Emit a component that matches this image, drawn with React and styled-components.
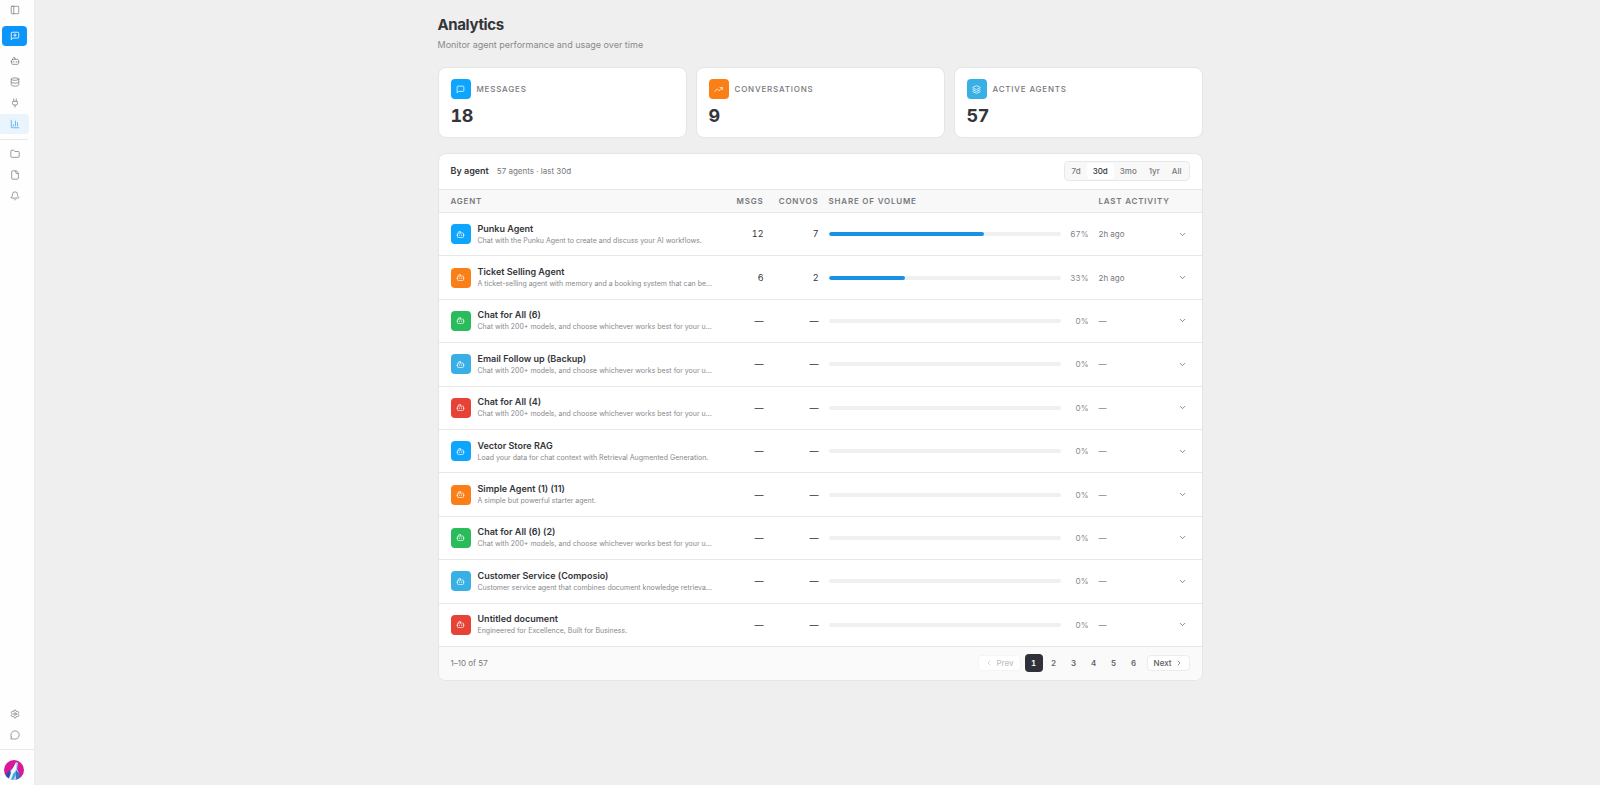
import React, { useState } from "react";
import styled, { createGlobalStyle } from "styled-components";
import {
  PanelLeft, Bot, Database, Plug, ChartColumn, Folder, File, Bell,
  Settings, MessageCircle, TrendingUp, Layers, ChevronDown, ChevronLeft, ChevronRight,
} from "lucide-react";

const GlobalStyle = createGlobalStyle`
  * { box-sizing: border-box; }
  body {
    margin: 0;
    background: #efefef;
    color: #34353a;
    font-family: Inter, "Liberation Sans", sans-serif;
    font-size: 9px;
    line-height: 12px;
  }
  button { font: inherit; cursor: pointer; }
  h1, h2, p { margin: 0; }
`;

const Shell = styled.div`
  display: flex;
  min-height: 100vh;
`;

const Sidebar = styled.nav`
  display: flex;
  flex-direction: column;
  flex: none;
  width: 35px;
  padding-top: 5px;
  background: #fefefe;
  border-right: 1px solid #ebebec;
`;

const NavGroup = styled.div`
  display: flex;
  flex-direction: column;
  align-items: flex-start;
  gap: 1px;
  padding: ${(p) => p.$pad || "0"};
  margin-top: ${(p) => (p.$bottom ? "auto" : "0")};
`;

const NavButton = styled.button`
  display: grid;
  place-items: center;
  width: 29px;
  height: ${(p) => (p.$short ? "10px" : "20px")};
  padding: 0;
  border: 0;
  border-radius: 0 4px 4px 0;
  color: ${(p) => (p.$active ? "#3aa0ea" : "#77787c")};
  background: ${(p) => (p.$active ? "#e9f4fd" : "transparent")};
`;

const NewChat = styled.button`
  display: grid;
  place-items: center;
  width: 25px;
  height: 20px;
  margin: 11px 2px 5px;
  padding: 0;
  border: 0;
  border-radius: 4px;
  color: #fff;
  background: #0c96fa;
`;

const Rule = styled.hr`
  width: ${(p) => (p.$full ? "100%" : "28px")};
  height: 1px;
  margin: 0;
  border: 0;
  background: #e8e8ea;
`;

const Avatar = styled.button`
  width: 20px;
  height: 20px;
  margin: 10px 4px 5px;
  padding: 0;
  border: 0;
  border-radius: 50%;
  overflow: hidden;
  background: none;
  svg { display: block; }
`;

const Main = styled.main`
  flex: 1;
  min-width: 0;
  padding: 15px 16px 24px 21px;
`;

const Page = styled.div`
  max-width: 765px;
  margin: 0 auto;
`;

const Title = styled.h1`
  font-size: 15px;
  line-height: 20px;
  font-weight: 700;
  letter-spacing: -0.025em;
`;

const Subtitle = styled.p`
  margin-top: 4px;
  color: #88898d;
`;

const Stats = styled.section`
  display: grid;
  grid-template-columns: repeat(3, 1fr);
  gap: 9px;
  margin: 16px 0 15px;
`;

const Panel = styled.section`
  background: #fff;
  border: 1px solid #e5e5e7;
  border-radius: 8px;
  overflow: hidden;
`;

const Stat = styled(Panel).attrs({ as: "article" })`
  padding: 11px 12px 10px;
`;

const StatHead = styled.div`
  display: flex;
  align-items: center;
  gap: 6px;
`;

const Overline = styled.h2`
  font-size: 8px;
  font-weight: 500;
  letter-spacing: 0.1em;
  text-transform: uppercase;
  color: #77787c;
`;

const StatValue = styled.p`
  margin-top: 6px;
  font-size: 18px;
  line-height: 22px;
  font-weight: 700;
  letter-spacing: -0.025em;
  font-variant-numeric: tabular-nums;
`;

const Tile = styled.span`
  display: grid;
  place-items: center;
  flex: none;
  width: 20px;
  height: 20px;
  border-radius: 4px;
  color: #fff;
  background: ${(p) => p.$color};
`;

const Toolbar = styled.header`
  display: flex;
  align-items: center;
  justify-content: space-between;
  padding: 7px 12px 8px;
`;

const Heading = styled.div`
  display: flex;
  align-items: baseline;
  gap: 8px;
  font-size: 8px;
  color: #77787c;
  h2 {
    font-size: 9px;
    font-weight: 600;
    color: #34353a;
  }
`;

const Segments = styled.div`
  display: flex;
  padding: 1px;
  border: 1px solid #e8e8ea;
  border-radius: 4px;
  background: #f8f8f9;
`;

const Segment = styled.button`
  height: 16px;
  padding: 0 6px;
  border: 0;
  border-radius: 3px;
  font-size: 8px;
  font-weight: 500;
  color: ${(p) => (p.$active ? "#34353a" : "#77787c")};
  background: ${(p) => (p.$active ? "#fff" : "transparent")};
`;

const Table = styled.table`
  width: 100%;
  height: 458px;
  table-layout: fixed;
  border-collapse: separate;
  border-spacing: 0;
`;

const Col = styled.col`
  width: ${(p) => p.$width || "auto"};
`;

const Th = styled.th`
  height: 24px;
  padding: ${(p) => (p.$first ? "0 5px 0 12px" : p.$align ? "0 5px" : "0 0 0 5px")};
  border: solid #e6e6e8;
  border-width: 1px 0;
  background: #f8f8f9;
  font-size: 8px;
  font-weight: 600;
  letter-spacing: 0.1em;
  text-transform: uppercase;
  text-align: ${(p) => p.$align || "left"};
  white-space: nowrap;
  color: #77787c;
`;

const Td = styled.td`
  padding: ${(p) => (p.$first ? "0 0 0 12px" : "0 5px")};
  border-bottom: 1px solid #e8e8ea;
  text-align: ${(p) => p.$align || "left"};
  color: ${(p) => (p.$muted ? "#77787c" : "#34353a")};
  font-variant-numeric: ${(p) => (p.$align ? "tabular-nums" : "normal")};
  font-size: ${(p) => (p.$muted ? "8px" : "9px")};
`;

const AgentCell = styled.div`
  display: flex;
  align-items: center;
  gap: 7px;
`;

const AgentText = styled.div`
  min-width: 0;
`;

const AgentName = styled.p`
  line-height: 13px;
  font-weight: 600;
`;

const AgentNote = styled.p`
  font-size: 7px;
  color: #88898d;
  white-space: nowrap;
`;

const Share = styled.div`
  display: flex;
  align-items: center;
  gap: 4px;
`;

const Track = styled.div`
  flex: 1;
  height: 4px;
  border-radius: 2px;
  background: #f0f0f1;
  overflow: hidden;
`;

const Fill = styled.div`
  height: 100%;
  border-radius: 2px;
  background: #1b91e6;
`;

const Percent = styled.span`
  width: 24px;
  font-size: 8px;
  text-align: right;
  color: #88898d;
  font-variant-numeric: tabular-nums;
`;

const Expand = styled.button`
  display: grid;
  place-items: center;
  width: 16px;
  height: 16px;
  padding: 0;
  border: 0;
  background: none;
  color: #66676b;
`;

const Footer = styled.footer`
  display: flex;
  align-items: center;
  justify-content: space-between;
  padding: 7px 12px 8px;
  background: #fafafa;
  font-size: 8px;
  color: #77787c;
`;

const Pager = styled.nav`
  display: flex;
  align-items: center;
  gap: 4px;
`;

const Pages = styled.div`
  display: flex;
  gap: 2px;
`;

const PageButton = styled.button`
  width: 18px;
  height: 18px;
  padding: 0;
  border: 0;
  border-radius: 4px;
  font-weight: 600;
  font-variant-numeric: tabular-nums;
  color: ${(p) => (p.$active ? "#fff" : "#66676b")};
  background: ${(p) => (p.$active ? "#303138" : "transparent")};
`;

const StepButton = styled.button`
  display: flex;
  align-items: center;
  gap: 3px;
  height: 16px;
  padding: 0 6px;
  border: 1px solid #ececee;
  border-radius: 4px;
  font-weight: 500;
  background: #fff;
  color: #5b5c61;
  &:disabled {
    color: #c2c2c5;
    border-color: #f4f4f5;
  }
`;

function Bubble({ size, plus }) {
  return (
    <svg
      width={size} height={size} viewBox="0 0 24 24" fill="none" stroke="currentColor"
      strokeWidth="2" strokeLinecap="round" strokeLinejoin="round" aria-hidden="true"
    >
      <path d="M21 15a2 2 0 0 1-2 2H7l-4 4V5a2 2 0 0 1 2-2h14a2 2 0 0 1 2 2z" />
      {plus && <path d="M12 7v6M9 10h6" />}
    </svg>
  );
}

const stats = [
  { label: "Messages", value: 18, color: "#0ea5ff", Icon: Bubble },
  { label: "Conversations", value: 9, color: "#f97f16", Icon: TrendingUp },
  { label: "Active agents", value: 57, color: "#38b0e5", Icon: Layers },
];

const tileColors = ["#0ea5ff", "#f97f16", "#2abb5b", "#38b0e5", "#e64236"];
const modelsNote = "Chat with 200+ models, and choose whichever works best for your u…";

const agents = [
  { name: "Punku Agent", note: "Chat with the Punku Agent to create and discuss your AI workflows.", msgs: 12, convos: 7, share: 67, last: "2h ago" },
  { name: "Ticket Selling Agent", note: "A ticket-selling agent with memory and a booking system that can be…", msgs: 6, convos: 2, share: 33, last: "2h ago" },
  { name: "Chat for All (6)", note: modelsNote },
  { name: "Email Follow up (Backup)", note: modelsNote },
  { name: "Chat for All (4)", note: modelsNote },
  { name: "Vector Store RAG", note: "Load your data for chat context with Retrieval Augmented Generation." },
  { name: "Simple Agent (1) (11)", note: "A simple but powerful starter agent." },
  { name: "Chat for All (6) (2)", note: modelsNote },
  { name: "Customer Service (Composio)", note: "Customer service agent that combines document knowledge retrieva…" },
  { name: "Untitled document", note: "Engineered for Excellence, Built for Business." },
];

const ranges = ["7d", "30d", "3mo", "1yr", "All"];

const navMain = [["Agents", Bot], ["Data", Database], ["Connections", Plug], ["Analytics", ChartColumn]];
const navFiles = [["Folders", Folder], ["Files", File], ["Notifications", Bell]];
const navFoot = [["Settings", Settings], ["Feedback", MessageCircle]];

function NavItems({ items }) {
  return items.map(([label, Icon]) => (
    <NavButton key={label} aria-label={label} $active={label === "Analytics"}>
      <Icon size={10} strokeWidth={1.75} />
    </NavButton>
  ));
}

function AvatarArt() {
  return (
    <svg width="20" height="20" viewBox="0 0 20 20" aria-hidden="true">
      <rect width="20" height="20" fill="#d9189c" />
      <path d="M2 20 L5 12 L9 8 L12 2 L14 3 L13 9 L15 13 L14 20 Z" fill="#a9dcf2" />
      <path d="M1 15 L6 10 L7 14 L4 20 L0 20 Z" fill="#2d4fa8" />
      <path d="M8 10 L12 3 L12 9 L7 19 L5 19 Z" fill="#f4f9fc" />
      <path d="M12 10 L16 14 L15 19 L12 20 Z" fill="#2f79c4" />
      <path d="M9 14 L12 11 L12 15 L9 20 L7 20 Z" fill="#4aa8dd" />
    </svg>
  );
}

export default function App() {
  const [range, setRange] = useState("30d");
  const [page, setPage] = useState(1);
  return (
    <Shell>
      <GlobalStyle />
      <Sidebar aria-label="Main">
        <NavButton $short aria-label="Toggle sidebar"><PanelLeft size={10} strokeWidth={1.75} /></NavButton>
        <NewChat aria-label="New chat"><Bubble size={10} plus /></NewChat>
        <NavGroup $pad="0 0 5px"><NavItems items={navMain} /></NavGroup>
        <Rule />
        <NavGroup $pad="4px 0"><NavItems items={navFiles} /></NavGroup>
        <NavGroup $bottom $pad="0 0 4px"><NavItems items={navFoot} /></NavGroup>
        <Rule $full />
        <Avatar aria-label="Account"><AvatarArt /></Avatar>
      </Sidebar>
      <Main>
        <Page>
          <Title>Analytics</Title>
          <Subtitle>Monitor agent performance and usage over time</Subtitle>
          <Stats>
            {stats.map(({ label, value, color, Icon }) => (
              <Stat key={label}>
                <StatHead>
                  <Tile $color={color}><Icon size={9} /></Tile>
                  <Overline>{label}</Overline>
                </StatHead>
                <StatValue>{value}</StatValue>
              </Stat>
            ))}
          </Stats>
          <Panel>
            <Toolbar>
              <Heading>
                <h2>By agent</h2>
                <span>57 agents · last {range}</span>
              </Heading>
              <Segments role="group" aria-label="Period">
                {ranges.map((r) => (
                  <Segment key={r} $active={r === range} aria-pressed={r === range} onClick={() => setRange(r)}>{r}</Segment>
                ))}
              </Segments>
            </Toolbar>
            <Table>
              <colgroup>
                <Col />
                <Col $width="53px" />
                <Col $width="55px" />
                <Col $width="270px" />
                <Col $width="76px" />
                <Col $width="32px" />
              </colgroup>
              <thead>
                <tr>
                  <Th $first>Agent</Th>
                  <Th $align="right">Msgs</Th>
                  <Th $align="right">Convos</Th>
                  <Th>Share of volume</Th>
                  <Th>Last activity</Th>
                  <Th aria-label="Expand" />
                </tr>
              </thead>
              <tbody>
                {agents.map((a, i) => (
                  <tr key={a.name}>
                    <Td $first>
                      <AgentCell>
                        <Tile $color={tileColors[i % tileColors.length]}><Bot size={9} strokeWidth={1.75} /></Tile>
                        <AgentText>
                          <AgentName>{a.name}</AgentName>
                          <AgentNote>{a.note}</AgentNote>
                        </AgentText>
                      </AgentCell>
                    </Td>
                    <Td $align="right">{a.msgs || "—"}</Td>
                    <Td $align="right">{a.convos || "—"}</Td>
                    <Td>
                      <Share>
                        <Track><Fill style={{ width: `${a.share || 0}%` }} /></Track>
                        <Percent>{a.share || 0}%</Percent>
                      </Share>
                    </Td>
                    <Td $muted>{a.last || "—"}</Td>
                    <Td><Expand aria-label={`Expand ${a.name}`}><ChevronDown size={9} /></Expand></Td>
                  </tr>
                ))}
              </tbody>
            </Table>
            <Footer>
              <span>1–10 of 57</span>
              <Pager aria-label="Pagination">
                <StepButton disabled={page === 1} onClick={() => setPage(page - 1)}><ChevronLeft size={8} />Prev</StepButton>
                <Pages>
                  {[1, 2, 3, 4, 5, 6].map((n) => (
                    <PageButton key={n} $active={n === page} onClick={() => setPage(n)}>{n}</PageButton>
                  ))}
                </Pages>
                <StepButton disabled={page === 6} onClick={() => setPage(page + 1)}>Next<ChevronRight size={8} /></StepButton>
              </Pager>
            </Footer>
          </Panel>
        </Page>
      </Main>
    </Shell>
  );
}
